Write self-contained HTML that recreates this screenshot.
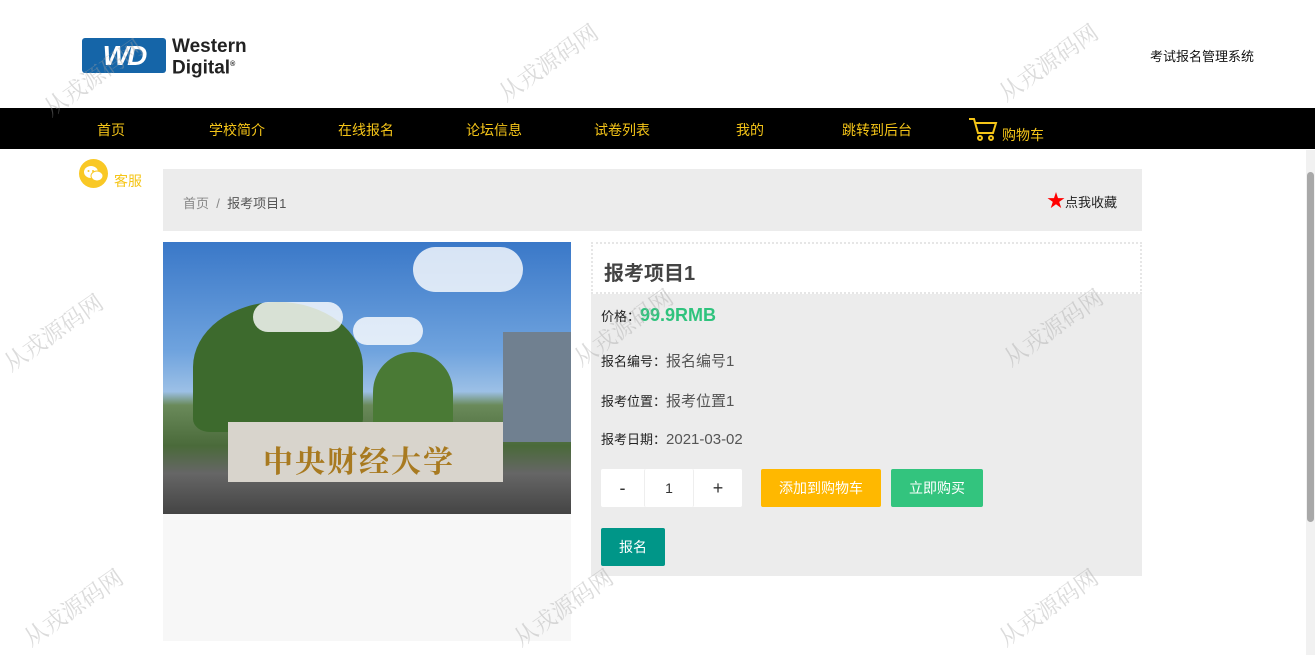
<!DOCTYPE html>
<html><head><meta charset="utf-8"><style>
*{margin:0;padding:0;box-sizing:border-box}
body{width:1315px;height:655px;overflow:hidden;background:#fff;font-family:"Liberation Sans","Noto Sans CJK SC",sans-serif;position:relative;font-size:14px;color:#333}
.abs{position:absolute}
.nav{left:0;top:108px;width:1315px;height:41px;background:#000}
.nav span{position:absolute;top:12px;color:#f5c518;font-size:14px}
.wm{position:absolute;color:rgba(160,160,160,.38);font-size:23px;font-family:"Noto Serif CJK SC",serif;transform:rotate(-35deg);white-space:nowrap}
.btn{position:absolute;height:38px;color:#fff;font-size:14px;text-align:center;line-height:38px;border-radius:2px}
.lab{position:absolute;left:10px;font-size:13px;color:#222}
.val{color:#555;font-size:15px}
</style></head><body>
<div class="abs" style="left:82px;top:38px;width:84px;height:35px;background:#1565a8;border-radius:3px;color:#fff;font:italic bold 28px 'Liberation Sans';text-align:center;line-height:35px;letter-spacing:-2px">WD</div>
<div class="abs" style="left:172px;top:38px;font:bold 19px/18px 'Liberation Sans';color:#222">Western<br>Digital<sup style="font-size:7px">®</sup></div>
<div class="abs" style="left:1150px;top:46px;font-size:13px;color:#111">考试报名管理系统</div>
<div class="abs nav">
<span style="left:97px">首页</span><span style="left:209px">学校简介</span><span style="left:338px">在线报名</span><span style="left:466px">论坛信息</span><span style="left:594px">试卷列表</span><span style="left:736px">我的</span><span style="left:842px">跳转到后台</span>
<svg style="position:absolute;left:968px;top:8px" width="30" height="26" viewBox="0 0 30 26" fill="none" stroke="#f5c518" stroke-width="2"><path d="M1 3h5l4 14h15l3-10H8"/><circle cx="12" cy="22" r="2"/><circle cx="23" cy="22" r="2"/></svg>
<span style="left:1002px;top:17px">购物车</span>
</div>
<div class="abs" style="left:79px;top:159px;width:29px;height:29px;border-radius:50%;background:#f9c825"></div>
<svg class="abs" style="left:83px;top:164px" width="22" height="20" viewBox="0 0 22 20"><ellipse cx="8" cy="8" rx="7" ry="6" fill="#fff"/><ellipse cx="14" cy="12" rx="6" ry="5" fill="#fff" stroke="#f9c825"/><circle cx="5.5" cy="7" r="1" fill="#f9c825"/><circle cx="10" cy="7" r="1" fill="#f9c825"/></svg>
<div class="abs" style="left:114px;top:171px;color:#f5c518;font-size:14px">客服</div>
<div class="abs" style="left:1306px;top:150px;width:9px;height:505px;background:#f1f1f1"></div>
<div class="abs" style="left:1307px;top:172px;width:7px;height:350px;background:#a8a8a8;border-radius:4px"></div>
<div class="abs" style="left:163px;top:169px;width:979px;height:62px;background:#ececec"></div>
<div class="abs" style="left:183px;top:193px;font-size:13px;color:#888">首页 &nbsp;/&nbsp; <span style="color:#555">报考项目1</span></div>
<div class="abs" style="left:1047px;top:192px;font-size:13px;color:#222"><span style="color:#f00;font-size:18px;line-height:14px">★</span>点我收藏</div>
<div class="abs" style="left:163px;top:514px;width:408px;height:127px;background:#f7f7f7"></div>
<div class="abs" style="left:163px;top:242px;width:408px;height:272px;overflow:hidden;background:linear-gradient(#3a78c8 0%,#6fa3de 40%,#9cc0e6 55%,#6a8a5a 60%,#4a6a3a 75%,#666 85%,#444 100%)">
<div class="abs" style="left:30px;top:60px;width:170px;height:130px;background:#3d6a2d;border-radius:50% 50% 10% 10%"></div>
<div class="abs" style="left:210px;top:110px;width:80px;height:80px;background:#4a7a35;border-radius:50% 50% 10% 10%"></div>
<div class="abs" style="left:340px;top:90px;width:68px;height:110px;background:#708090"></div>
<div class="abs" style="left:65px;top:180px;width:275px;height:60px;background:#d8d4cc"></div>
<div class="abs" style="left:100px;top:195px;color:#a87a20;font:bold 30px 'Noto Serif CJK SC',serif;letter-spacing:2px">中央财经大学</div>
<div class="abs" style="left:90px;top:60px;width:90px;height:30px;background:#fff;border-radius:20px;opacity:.8"></div>
<div class="abs" style="left:190px;top:75px;width:70px;height:28px;background:#fff;border-radius:20px;opacity:.8"></div>
<div class="abs" style="left:250px;top:5px;width:110px;height:45px;background:#fff;border-radius:25px;opacity:.8"></div>
</div>
<div class="abs" style="left:591px;top:242px;width:551px;height:52px;border:2px dotted #e6e6e6;background:#fff"></div>
<div class="abs" style="left:604px;top:257px;font-size:20px;font-weight:bold;color:#444">报考项目1</div>
<div class="abs" style="left:591px;top:294px;width:551px;height:282px;background:#ececec">
<div class="lab" style="top:11px">价格：<span style="color:#2fc37d;font-size:18px;font-weight:bold">99.9RMB</span></div>
<div class="lab" style="top:56px">报名编号：<span class="val">报名编号1</span></div>
<div class="lab" style="top:96px">报考位置：<span class="val">报考位置1</span></div>
<div class="lab" style="top:135px">报考日期：<span class="val">2021-03-02</span></div>
<div class="btn" style="left:10px;top:175px;width:141px;background:#fff;color:#333"></div>
<div class="btn" style="left:10px;top:175px;width:43px;color:#333;font-size:18px">-</div>
<div class="btn" style="left:53px;top:175px;width:50px;color:#333;border-left:1px solid #eee;border-right:1px solid #eee">1</div>
<div class="btn" style="left:103px;top:175px;width:48px;color:#333;font-size:18px">+</div>
<div class="btn" style="left:170px;top:175px;width:120px;background:#ffb800">添加到购物车</div>
<div class="btn" style="left:300px;top:175px;width:92px;background:#33c47e">立即购买</div>
<div class="btn" style="left:10px;top:234px;width:64px;background:#009688">报名</div>
</div>
<div class="wm" style="left:35px;top:60px">从戎源码网</div>
<div class="wm" style="left:490px;top:45px">从戎源码网</div>
<div class="wm" style="left:990px;top:45px">从戎源码网</div>
<div class="wm" style="left:-5px;top:315px">从戎源码网</div>
<div class="wm" style="left:995px;top:310px">从戎源码网</div>
<div class="wm" style="left:565px;top:310px">从戎源码网</div>
<div class="wm" style="left:15px;top:590px">从戎源码网</div>
<div class="wm" style="left:505px;top:590px">从戎源码网</div>
<div class="wm" style="left:990px;top:590px">从戎源码网</div>
</body></html>
